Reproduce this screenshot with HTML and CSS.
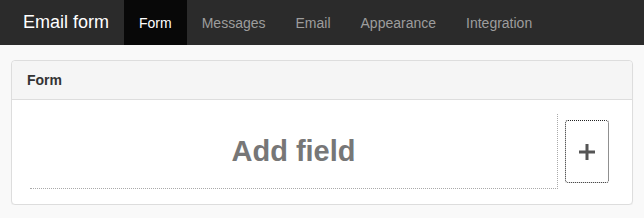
FILE: index.html
```html
<!DOCTYPE html>
<html lang="en">
<head>
    <meta charset="UTF-8">
    <title>Email form</title>
    <link rel="stylesheet" href="styles.css">
</head>
<body>
    <nav class="navbar">
        <a class="brand" href="#">Email form</a>
        <ul class="nav-tabs">
            <li class="active"><a href="#">Form</a></li>
            <li><a href="#">Messages</a></li>
            <li><a href="#">Email</a></li>
            <li><a href="#">Appearance</a></li>
            <li><a href="#">Integration</a></li>
        </ul>
    </nav>

    <div class="panel">
        <div class="panel-heading">Form</div>
        <div class="panel-body">
            <div class="field-drop">Add field</div>
            <button type="button" class="add-button">
                <svg width="16" height="16" viewBox="0 0 16 16">
                    <path d="M8 0V16M0 8H16" stroke="#555" stroke-width="3"/>
                </svg>
            </button>
        </div>
    </div>
</body>
</html>
```

FILE: styles.css
```css
body {
    margin: 0;
    font-family: "Liberation Sans", Arial, sans-serif;
    background-color: #f9f9f9;
}
.navbar {
    display: flex;
    align-items: stretch;
    height: 45px;
    padding-left: 8px;
    background-color: #2b2b2b;
}
.brand {
    display: flex;
    align-items: center;
    padding: 0 15px;
    color: #fff;
    font-size: 18px;
    text-decoration: none;
}
.nav-tabs {
    display: flex;
    margin: 0;
    padding: 0;
    list-style: none;
}
.nav-tabs li a {
    display: flex;
    align-items: center;
    height: 100%;
    padding: 0 15px;
    color: #9d9d9d;
    font-size: 14px;
    text-decoration: none;
}
.nav-tabs li.active a {
    background-color: #080808;
    color: #fff;
}
.panel {
    margin: 15px 11px 0 11px;
    background-color: #fff;
    border: 1px solid #ddd;
    border-radius: 4px;
    box-shadow: 0 1px 1px rgba(0,0,0,0.04);
}
.panel-heading {
    height: 38px;
    line-height: 38px;
    padding: 0 15px;
    background-color: #f5f5f5;
    border-bottom: 1px solid #ddd;
    border-radius: 4px 4px 0 0;
    color: #333;
    font-size: 14px;
    font-weight: bold;
}
.panel-body {
    display: flex;
    align-items: center;
    padding: 14px 23px 15px 18px;
}
.field-drop {
    flex: 1;
    height: 74px;
    display: flex;
    align-items: center;
    justify-content: center;
    border-bottom: 1px dotted #aaa;
    border-right: 1px dotted #aaa;
    color: #777;
    font-size: 29px;
    font-weight: bold;
}
.add-button {
    display: flex;
    align-items: center;
    justify-content: center;
    width: 44px;
    height: 63px;
    margin-left: 7px;
    padding: 0;
    background-color: #fff;
    border: 1px dotted #222;
    border-radius: 3px;
    cursor: pointer;
}
```
